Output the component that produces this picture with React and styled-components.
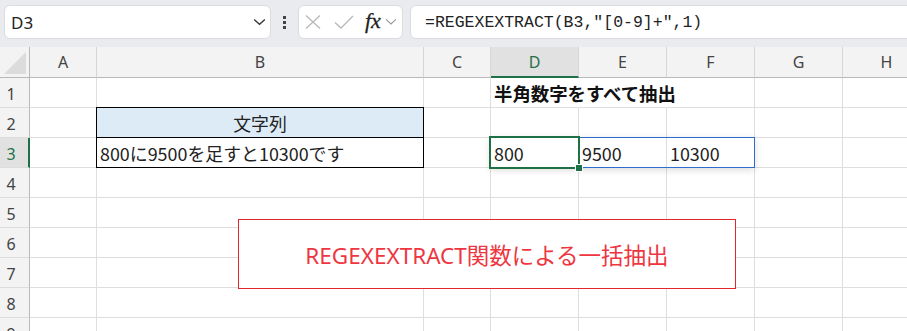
import React from 'react'
import styled, { createGlobalStyle } from 'styled-components'

const GlobalStyle = createGlobalStyle`
  html, body {
    margin: 0;
    padding: 0;
    background: #ffffff;
    overflow: hidden;
  }
  * { box-sizing: border-box; }
`;

const Window = styled.div`
  width: 907px;
  height: 331px;
  display: flex;
  flex-direction: column;
  overflow: hidden;
  font-family: "Noto Sans", "Noto Sans CJK JP", sans-serif;
`;

const Toolbar = styled.div`
  height: 47px;
  flex: none;
  display: flex;
  align-items: flex-start;
  padding: 5px 0 0 4px;
  background: #e9ebee;
`;

const Field = styled.div`
  height: 34px;
  display: flex;
  align-items: center;
  background: #ffffff;
  border: 1px solid #dadcdf;
  border-radius: 6px;
`;

const NameBox = styled(Field)`
  width: 267px;
  padding: 0 4px 0 6px;
  justify-content: space-between;
  font-size: 17px;
  color: #222;
`;

const Kebab = styled.div`
  width: 27px;
  height: 34px;
  display: flex;
  flex-direction: column;
  align-items: center;
  justify-content: center;
  gap: 2px;
  span {
    width: 3px;
    height: 3px;
    background: #444;
  }
`;

const FxBox = styled(Field)`
  width: 105px;
  padding: 0 0 0 6px;
`;

const FxLabel = styled.span`
  margin: -2px 0 0 11px;
  font-family: "Liberation Serif", serif;
  font-style: italic;
  font-size: 22px;
  line-height: 1;
  color: #222;
  -webkit-text-stroke: 0.3px #222;
`;

const FxChevron = styled.span`
  display: flex;
  margin-left: 4px;
`;

const CheckIcon = styled.svg`
  margin-left: 13px;
`;

const FormulaBox = styled(Field)`
  flex: 1;
  margin-left: 7px;
  margin-right: -12px;
  padding-left: 14px;
  font-family: "Liberation Mono", monospace;
  font-size: 16.5px;
  color: #222;
`;

const Sheet = styled.div`
  position: relative;
  display: grid;
  grid-template-columns: 30px 67px 327px 67px 88px 88px 88px 88px 88px;
  grid-template-rows: 31px repeat(9, 30px);
  flex: none;
`;

const Corner = styled.div`
  grid-column: 1;
  grid-row: 1;
  background: #f3f3f3;
  border-right: 1px solid #b8b8b8;
  border-bottom: 1px solid #b8b8b8;
  display: flex;
  align-items: flex-end;
  justify-content: flex-end;
  padding: 0 3px 3px 0;
`;

const ColHeader = styled.div`
  grid-column: ${p => p.$col};
  grid-row: 1;
  background: ${p => (p.$active ? '#e1e1e1' : '#f3f3f3')};
  color: ${p => (p.$active ? '#1e7145' : '#444')};
  border-right: 1px solid #d6d6d6;
  border-bottom: ${p => (p.$active ? '2px solid #1e7145' : '1px solid #b8b8b8')};
  display: flex;
  align-items: center;
  justify-content: center;
  font-size: 16px;
  padding-top: ${p => (p.$active ? '1px' : '0')};
`;

const RowHeader = styled.div`
  grid-column: 1;
  grid-row: ${p => p.$row};
  background: ${p => (p.$active ? '#e1e1e1' : '#f3f3f3')};
  color: ${p => (p.$active ? '#1e7145' : '#444')};
  border-right: ${p => (p.$active ? '2px solid #1e7145' : '1px solid #b8b8b8')};
  border-bottom: 1px solid #dcdcdc;
  display: flex;
  align-items: center;
  justify-content: center;
  padding: 2px ${p => (p.$active ? '6px' : '7px')} 0 0;
  font-size: 16px;
`;

const Cell = styled.div`
  grid-column: ${p => p.$col};
  grid-row: ${p => p.$row};
  background: ${p => p.$fill || '#ffffff'};
  border-right: 1px solid ${p => (p.$noRight ? 'transparent' : '#dedede')};
  border-bottom: 1px solid ${p => p.$line || '#dedede'};
  display: flex;
  align-items: center;
  justify-content: ${p => (p.$align === 'center' ? 'center' : 'flex-start')};
  padding: 1px 3px 0;
  white-space: nowrap;
  overflow: visible;
  font-family: "Noto Sans CJK JP", sans-serif;
  font-size: ${p => (p.$bold ? '18.4px' : '17.9px')};
  font-weight: ${p => (p.$bold ? 700 : 400)};
  color: ${p => (p.$bold ? '#111' : '#222')};
  position: relative;
  z-index: ${p => (p.$spill ? 1 : 0)};
`;

const TableFrame = styled.div`
  grid-column: 3;
  grid-row: 3 / 5;
  margin: -1px 0 0 -1px;
  border: 1px solid #000;
  pointer-events: none;
  z-index: 2;
`;

const SpillRange = styled.div`
  grid-column: 5 / 8;
  grid-row: 4;
  margin: -1px 0 0 -1px;
  border: 1px solid #2f6ccf;
  box-shadow: 0 2px 7px rgba(0, 0, 0, 0.14);
  pointer-events: none;
  z-index: 2;
`;

const Selection = styled.div`
  grid-column: 5;
  grid-row: 4;
  margin: -2px -1px -1px -2px;
  border: 2px solid #1e7145;
  position: relative;
  pointer-events: none;
  z-index: 3;
`;

const FillHandle = styled.div`
  position: absolute;
  right: -5px;
  bottom: -5px;
  width: 8px;
  height: 8px;
  background: #1e7145;
  border: 1px solid #ffffff;
`;

const Callout = styled.div`
  position: absolute;
  left: 238px;
  top: 172px;
  width: 498px;
  height: 70px;
  border: 1px solid #e3262f;
  background: #ffffff;
  display: flex;
  align-items: center;
  justify-content: center;
  color: #ee3641;
  font-family: "Noto Sans", "Noto Sans CJK JP", sans-serif;
  font-size: 22.5px;
  z-index: 4;
`;

const Chevron = ({ color = '#333', size = 13 }) => (
  <svg width={size} height={size * 0.6} viewBox="0 0 13 8" fill="none">
    <path d="M1 1.5 L6.5 6.5 L12 1.5" stroke={color} strokeWidth="1.3" />
  </svg>
);

const cols = ['A', 'B', 'C', 'D', 'E', 'F', 'G', 'H'];
const rows = [1, 2, 3, 4, 5, 6, 7, 8, 9];

const cells = {
  D1: { text: '半角数字をすべて抽出', bold: true, noRight: true, spill: true },
  E1: { noRight: true },
  B2: { text: '文字列', align: 'center', fill: '#ddebf7', line: '#000' },
  B3: { text: '800に9500を足すと10300です' },
  D3: { text: '800' },
  E3: { text: '9500' },
  F3: { text: '10300' },
};

export default function App() {
  return (
    <Window>
      <GlobalStyle />
      <Toolbar>
        <NameBox>
          <span>D3</span>
          <Chevron />
        </NameBox>
        <Kebab>
          <span />
          <span />
          <span />
        </Kebab>
        <FxBox>
          <svg width="16" height="14" viewBox="0 0 16 14" fill="none">
            <path d="M1 0.5 L15 13.5 M15 0.5 L1 13.5" stroke="#b8b8b8" strokeWidth="1.3" />
          </svg>
          <CheckIcon width="20" height="14" viewBox="0 0 20 14" fill="none">
            <path d="M1 7.5 L7 13 L19 1" stroke="#b8b8b8" strokeWidth="1.3" />
          </CheckIcon>
          <FxLabel>fx</FxLabel>
          <FxChevron>
            <Chevron color="#999" size={12} />
          </FxChevron>
        </FxBox>
        <FormulaBox>=REGEXEXTRACT(B3,"[0-9]+",1)</FormulaBox>
      </Toolbar>

      <Sheet>
        <Corner>
          <svg width="22" height="22" viewBox="0 0 22 22">
            <polygon points="22,0 22,22 0,22" fill="#dcdcdc" />
          </svg>
        </Corner>
        {cols.map((c, i) => (
          <ColHeader key={c} $col={i + 2} $active={c === 'D'}>
            {c}
          </ColHeader>
        ))}
        {rows.map(r => (
          <React.Fragment key={r}>
            <RowHeader $row={r + 1} $active={r === 3}>{r}</RowHeader>
            {cols.map((c, i) => {
              const d = cells[c + r] || {};
              return (
                <Cell
                  key={c + r}
                  $col={i + 2}
                  $row={r + 1}
                  $bold={d.bold}
                  $noRight={d.noRight}
                  $spill={d.spill}
                  $align={d.align}
                  $fill={d.fill}
                  $line={d.line}
                >
                  {d.text}
                </Cell>
              );
            })}
          </React.Fragment>
        ))}
        <TableFrame />
        <SpillRange />
        <Selection>
          <FillHandle />
        </Selection>
        <Callout>REGEXEXTRACT関数による一括抽出</Callout>
      </Sheet>
    </Window>
  );
}
